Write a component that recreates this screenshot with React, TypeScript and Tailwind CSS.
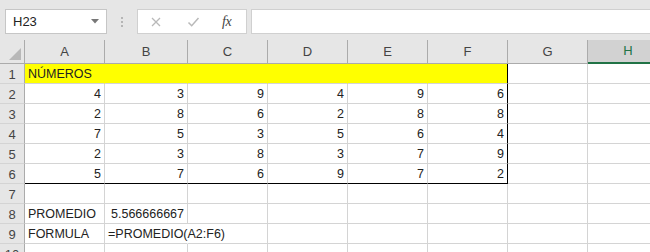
import React from "react";

const cols = ["A", "B", "C", "D", "E", "F", "G", "H"];
const widths = ["w-[80px]", "w-[83px]", "w-[80px]", "w-[80px]", "w-[80px]", "w-[80px]", "w-[80px]", "w-[80px]"];

const data = [
  [4, 3, 9, 4, 9, 6],
  [2, 8, 6, 2, 8, 8],
  [7, 5, 3, 5, 6, 4],
  [2, 3, 8, 3, 7, 9],
  [5, 7, 6, 9, 7, 2],
];

function Cell({ c, r }: { c: number; r: number }) {
  // r = número de fila (1-based), c = índice de columna (0 = A)
  const inTable = c <= 5 && r >= 1 && r <= 6;
  const yellow = r === 1 && c <= 5;
  let cls = `${widths[c]} h-5 shrink-0 border-b border-r border-[#d4d4d4] px-[3px] pt-[1px] leading-[19px] whitespace-nowrap`;
  if (yellow) cls += " bg-[#ffff00] border-r-[#ffff00]";
  if (inTable && c === 5) cls += " border-r-black";
  if (inTable && r === 6) cls += " border-b-black";

  let content: React.ReactNode = null;
  let align = "text-left";
  if (r === 1 && c === 0) content = "NÚMEROS";
  if (r >= 2 && r <= 6 && c <= 5) {
    content = data[r - 2][c];
    align = "text-right";
  }
  if (r === 8 && c === 0) content = "PROMEDIO";
  if (r === 8 && c === 1) {
    content = "5.566666667";
    align = "text-right";
  }
  if (r === 9 && c === 0) content = "FORMULA";
  if (r === 9 && c === 1) {
    content = "=PROMEDIO(A2:F6)";
    cls += " border-r-transparent relative z-10";
  }
  return <div className={`${cls} ${align}`}>{content}</div>;
}

export default function App() {
  const rows = [1, 2, 3, 4, 5, 6, 7, 8, 9, 10];
  return (
    <div className="w-[650px] h-[252px] overflow-hidden bg-white text-[#222] font-['Liberation_Sans',Arial,sans-serif]">
      {/* barra de fórmulas */}
      <div className="h-10 bg-[#e6e6e6] flex items-start pt-[9px] pl-[5px]">
        <div className="w-[102px] h-[25px] bg-white border border-[#c6c6c6] flex items-center justify-between pl-[7px] pr-[7px] text-[13px]">
          <span>H23</span>
          <svg width="8" height="5" viewBox="0 0 8 5"><path d="M0 0h8L4 4.5z" fill="#777" /></svg>
        </div>
        <div className="w-[30px] h-[25px] flex flex-col items-center justify-center gap-[2px]">
          <span className="w-[2px] h-[2px] bg-[#b5b5b5]" />
          <span className="w-[2px] h-[2px] bg-[#b5b5b5]" />
          <span className="w-[2px] h-[2px] bg-[#b5b5b5]" />
        </div>
        <div className="w-[110px] h-[25px] bg-white border border-[#d0d0d0] flex items-center pl-[12px]">
          <svg width="12" height="12" viewBox="0 0 12 12">
            <path d="M2 2l8 8M10 2l-8 8" stroke="#b9b9b9" strokeWidth="1.3" />
          </svg>
          <svg width="13" height="12" viewBox="0 0 13 12" className="ml-[25px]">
            <path d="M1.5 6.5l3.2 3.2L11.5 2" stroke="#b9b9b9" strokeWidth="1.5" fill="none" />
          </svg>
          <span className="ml-[22px] italic font-['Liberation_Serif',serif] text-[14px] text-[#444] tracking-[-0.5px]">fx</span>
        </div>
        <div className="ml-[4px] flex-1 h-[25px] bg-white border-y border-l border-[#d0d0d0]" />
      </div>

      {/* cabecera de columnas */}
      <div className="flex h-6 bg-[#e6e6e6] border-b border-[#ababab] text-[13px] text-[#444]">
        <div className="w-[25px] shrink-0 border-r border-[#ababab] relative">
          <svg width="12" height="12" viewBox="0 0 12 12" className="absolute right-[3px] bottom-[3px]">
            <path d="M12 0v12H0z" fill="#b8b8b8" />
          </svg>
        </div>
        {cols.map((c, i) =>
          c === "H" ? (
            <div
              key={c}
              className={`${widths[i]} shrink-0 bg-[#d2d2d2] border-b-2 border-[#217346] text-[#217346] flex items-center justify-center mb-[-1px]`}
            >
              {c}
            </div>
          ) : (
            <div key={c} className={`${widths[i]} shrink-0 border-r border-[#ababab] flex items-center justify-center`}>
              {c}
            </div>
          )
        )}
      </div>

      {/* filas */}
      <div className="text-[12.5px]">
        {rows.map((r) => (
          <div key={r} className="flex">
            <div className="w-[25px] h-5 shrink-0 bg-[#e6e6e6] border-r border-[#ababab] border-b border-b-[#d4d4d4] text-[13px] text-[#444] text-center pt-[1px] leading-[19px]">
              {r}
            </div>
            {cols.map((_, c) => (
              <Cell key={c} c={c} r={r} />
            ))}
          </div>
        ))}
      </div>
    </div>
  );
}
